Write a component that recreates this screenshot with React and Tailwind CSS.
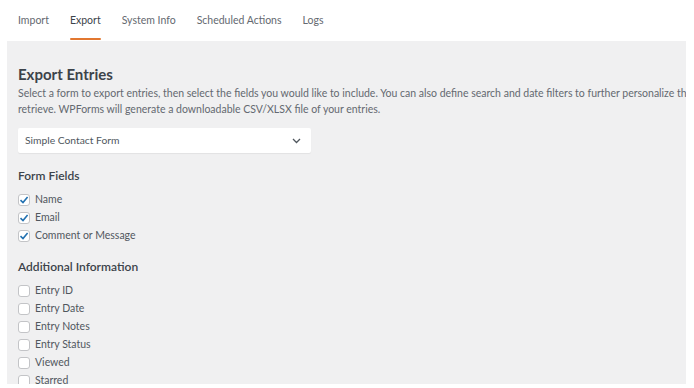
import React from 'react';

const tabs = ['Import', 'Export', 'System Info', 'Scheduled Actions', 'Logs'];
const formFields = ['Name', 'Email', 'Comment or Message'];
const additional = ['Entry ID', 'Entry Date', 'Entry Notes', 'Entry Status', 'Viewed', 'Starred'];

const Check = ({ checked, label }) => (
    <label className="flex items-center h-[18px] gap-[5px] text-[10.5px] text-[#50575e]">
        <span className="w-[12px] h-[12px] rounded-[3px] border border-[#c3c4c7] bg-white flex items-center justify-center">
            {checked && (
                <svg width="10" height="10" viewBox="0 0 10 10">
                    <path d="M1.5 5.2 L4 7.6 L8.6 2" fill="none" stroke="#2271b1" strokeWidth="1.6" />
                </svg>
            )}
        </span>
        {label}
    </label>
);

export default function App() {
    return (
        <div className="w-[694px] h-[388px] bg-white overflow-hidden" style={{ fontFamily: 'Lato, sans-serif' }}>
            {/* Tabs */}
            <div className="flex h-[41px] pl-[18px] gap-[21px]">
                {tabs.map(tab => (
                    <div key={tab} className={`relative flex items-center text-[10.5px] ${tab === 'Export' ? 'text-[#3c434a]' : 'text-[#646970]'}`}>
                        {tab}
                        {tab === 'Export' && <span className="absolute left-0 right-0 bottom-[1px] h-[2px] bg-[#e27730] rounded" />}
                    </div>
                ))}
            </div>

            {/* Panel */}
            <div className="ml-[7px] w-[679px] h-[343px] bg-[#f0f0f1] overflow-hidden pl-[11px] pt-[24px]">
                <h2 className="text-[15px] font-bold text-[#3c434a] leading-[18px] whitespace-nowrap">Export Entries</h2>
                <p className="mt-[2px] text-[10.5px] leading-[16px] text-[#646970] whitespace-nowrap">
                    Select a form to export entries, then select the fields you would like to include. You can also define search and date filters to further personalize the list of entries you want to
                    <br />
                    retrieve. WPForms will generate a downloadable CSV/XLSX file of your entries.
                </p>

                <div className="mt-[11px] w-[293px] h-[25px] bg-white rounded-[2px] shadow-[0_1px_1px_rgba(0,0,0,0.06)] flex items-center justify-between pl-[7px] pr-[10px] text-[10.3px] text-[#50575e]">
                    <span>Simple Contact Form</span>
                    <svg width="9" height="6" viewBox="0 0 9 6">
                        <path d="M1 1 L4.5 4.5 L8 1" fill="none" stroke="#50575e" strokeWidth="1.3" />
                    </svg>
                </div>

                <h3 className="mt-[15px] text-[12px] font-semibold text-[#3c434a] leading-[16px]">Form Fields</h3>
                <div className="mt-[7px] flex flex-col">
                    {formFields.map(f => <Check key={f} checked label={f} />)}
                </div>

                <h3 className="mt-[14px] text-[12px] font-semibold text-[#3c434a] leading-[16px]">Additional Information</h3>
                <div className="mt-[7px] flex flex-col">
                    {additional.map(f => <Check key={f} label={f} />)}
                </div>
            </div>
        </div>
    );
}
